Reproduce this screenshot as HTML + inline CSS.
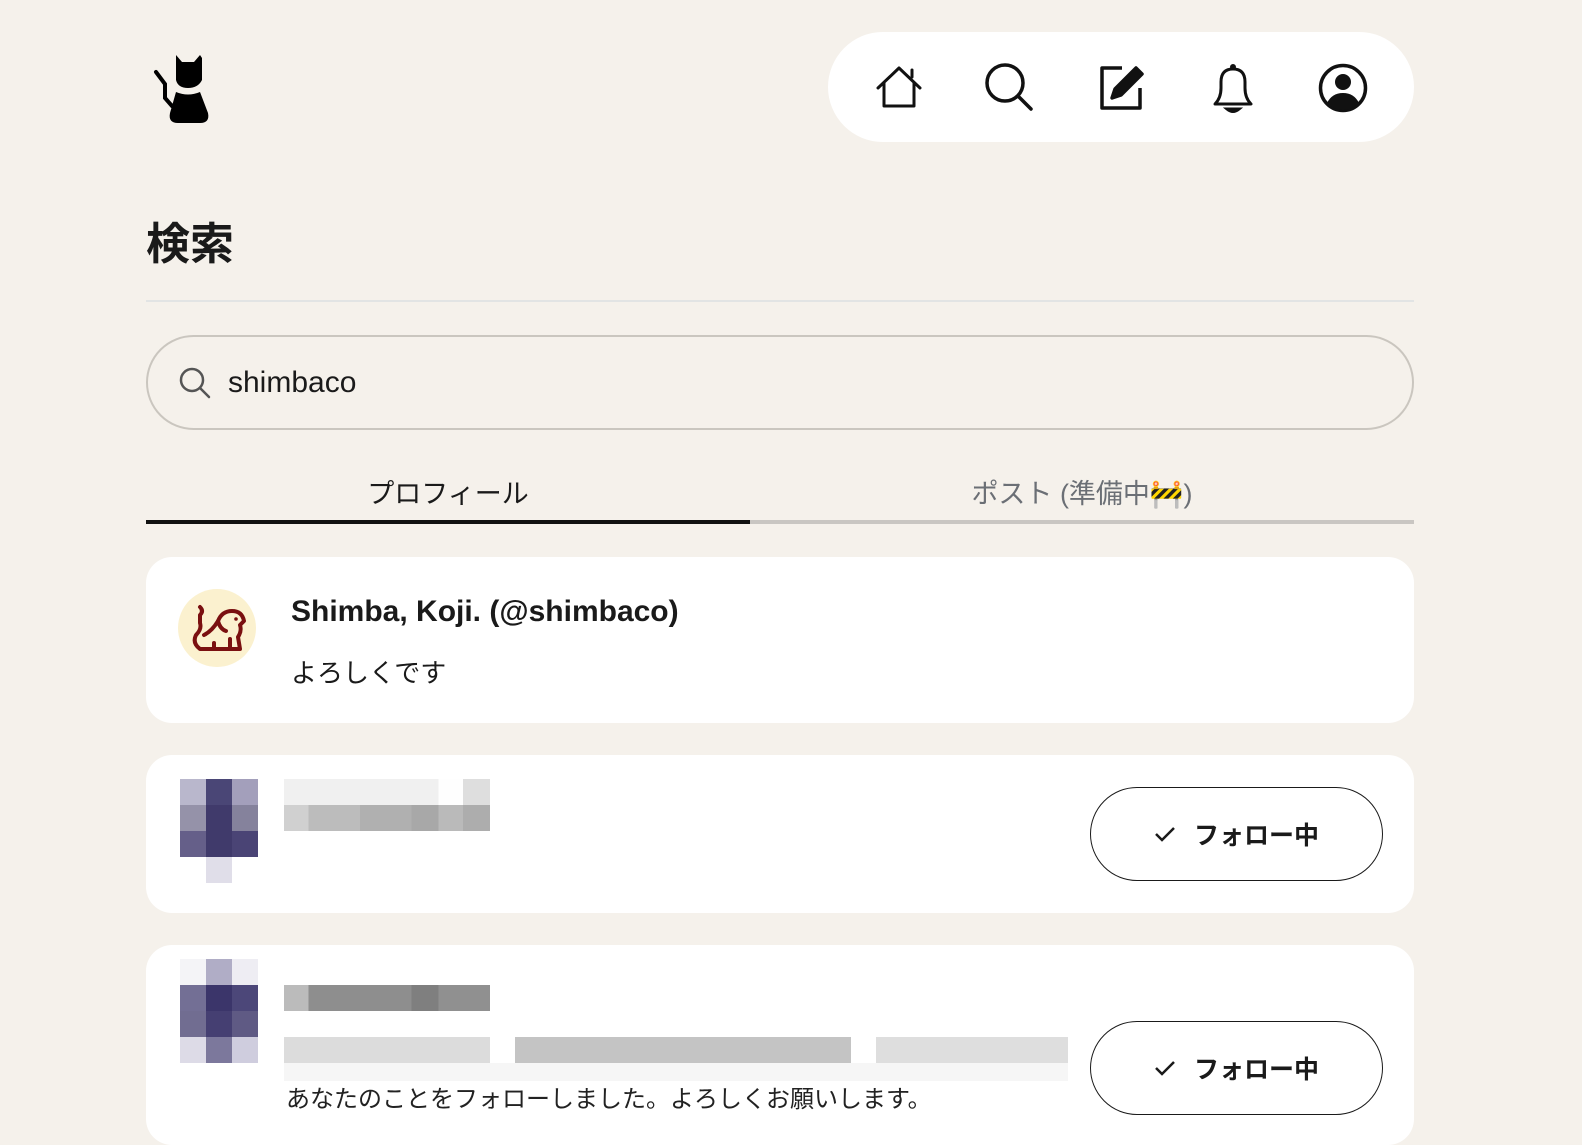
<!DOCTYPE html>
<html><head><meta charset="utf-8"><style>
*{box-sizing:border-box;margin:0;padding:0}
body{width:1582px;height:1098px;overflow:hidden;background:#f5f1eb;font-family:"Liberation Sans","Noto Sans CJK JP",sans-serif;color:#1a1a1a;position:relative}
.abs{position:absolute}
.nav{left:828px;top:32px;width:586px;height:110px;background:#fff;border-radius:55px}
.card{left:146px;width:1268px;background:#fff;border-radius:26px}
.blk{position:absolute;height:26px}
.btn{position:absolute;left:944px;width:293px;height:94px;border:1.5px solid #1a1a1a;border-radius:47px;font-weight:bold;font-size:25px;display:flex;align-items:center;justify-content:center;gap:18px}
</style></head><body>
<svg class="abs" style="left:152px;top:50px" width="62" height="76" viewBox="0 0 62 76">
<path d="M4 22 L13 34 L13 48 L20 56" stroke="#000" stroke-width="4" fill="none" stroke-linecap="round"/>
<path d="M24 5 L30 12 L42 12 L48 5 L50 8 L50 30 Q46 38 36 38 Q26 38 24 30 Z" fill="#000"/>
<path d="M24 42 Q36 47 48 42 L56 63 Q58 73 48 73 L26 73 Q16 73 18 63 Z" fill="#000"/>
</svg>
<div class="abs nav"></div>
<svg class="abs" style="left:876px;top:64px" width="48" height="48" viewBox="0 0 48 48" fill="none" stroke="#111" stroke-width="3" stroke-linejoin="round" stroke-linecap="round"><path d="M2 24 L23 4 L44 24"/><path d="M8 19 L8 42 L38 42 L38 19"/><path d="M36 6 L36 13"/></svg>
<svg class="abs" style="left:984px;top:62px" width="52" height="52" viewBox="0 0 52 52" fill="none" stroke="#111" stroke-width="3.5" stroke-linecap="round"><circle cx="21" cy="21" r="18"/><path d="M34 34 L47 47"/></svg>
<svg class="abs" style="left:1098px;top:62px" width="50" height="50" viewBox="0 0 50 50" fill="none" stroke="#111" stroke-width="3.5" stroke-linejoin="round"><path d="M24 6 L4 6 L4 46 L42 46 L42 26"/><path d="M14 36 L17 27 L38 6 L44 12 L23 33 Z" fill="#111"/></svg>
<svg class="abs" style="left:1210px;top:62px" width="46" height="52" viewBox="0 0 46 52" fill="none" stroke="#111" stroke-width="3"><path d="M5 42 Q11 36 11 26 L11 20 Q11 7 23 7 Q35 7 35 20 L35 26 Q35 36 41 42 Z" stroke-linejoin="round"/><path d="M17 47 Q23 52 29 47 Z" fill="#111"/><circle cx="23" cy="5" r="1.5" fill="#111"/></svg>
<svg class="abs" style="left:1318px;top:63px" width="50" height="50" viewBox="0 0 50 50"><circle cx="25" cy="25" r="22.5" fill="none" stroke="#111" stroke-width="3.5"/><circle cx="25" cy="19" r="8" fill="#111"/><path d="M9 40 Q14 30 25 30 Q36 30 41 40 Q34 47 25 47 Q16 47 9 40Z" fill="#111"/></svg>
<div class="abs" style="left:146px;top:208px;font-size:44px;font-weight:bold">検索</div>
<div class="abs" style="left:146px;top:300px;width:1268px;height:2px;background:#e2e4e4"></div>
<div class="abs" style="left:146px;top:335px;width:1268px;height:95px;border:2px solid #cac6bf;border-radius:48px"></div>
<svg class="abs" style="left:178px;top:366px" width="34" height="34" viewBox="0 0 34 34" fill="none" stroke="#555" stroke-width="2.5" stroke-linecap="round"><circle cx="14" cy="14" r="11"/><path d="M22 22 L31 31"/></svg>
<div class="abs" style="left:228px;top:366px;font-size:30px">shimbaco</div>
<div class="abs" style="left:146px;top:472px;width:604px;text-align:center;font-size:27px">プロフィール</div>
<div class="abs" style="left:750px;top:472px;width:664px;text-align:center;font-size:27px;color:#6b6f75">ポスト (準備中🚧)</div>
<div class="abs" style="left:146px;top:520px;width:1268px;height:4px;background:#c9c6c2"></div>
<div class="abs" style="left:146px;top:520px;width:604px;height:4px;background:#111"></div>
<div class="abs card" style="top:557px;height:166px">
<svg style="position:absolute;left:32px;top:32px" width="78" height="78" viewBox="0 0 78 78"><circle cx="39" cy="39" r="39" fill="#fbf1cf"/><path d="M22 18 Q26 22 22 26 L22 34 Q24 40 18 46 Q14 54 22 60 L62 60 L60 48 Q64 42 62 36 L66 32 Q64 22 54 22 Q44 22 40 32 Q34 42 26 46 M40 32 Q42 40 48 42 M36 60 L36 54 M52 60 L52 50" fill="none" stroke="#7a1010" stroke-width="4" stroke-linejoin="round" stroke-linecap="round"/><circle cx="58" cy="30" r="1.8" fill="#7a1010"/></svg>
<div style="position:absolute;left:145px;top:38px;font-size:30px;font-weight:bold">Shimba, Koji. (@shimbaco)</div>
<div style="position:absolute;left:145px;top:96px;font-size:26px">よろしくです</div>
</div>
<div class="abs card" style="top:755px;height:158px">
<div class="blk" style="left:34px;top:24px;width:26px;background:#b9b7cc"></div>
<div class="blk" style="left:60px;top:24px;width:26px;background:#4a4676"></div>
<div class="blk" style="left:86px;top:24px;width:26px;background:#a39fbb"></div>
<div class="blk" style="left:34px;top:50px;width:26px;background:#9592a9"></div>
<div class="blk" style="left:60px;top:50px;width:26px;background:#403a6b"></div>
<div class="blk" style="left:86px;top:50px;width:26px;background:#85829c"></div>
<div class="blk" style="left:34px;top:76px;width:26px;background:#655f89"></div>
<div class="blk" style="left:60px;top:76px;width:26px;background:#403a6b"></div>
<div class="blk" style="left:86px;top:76px;width:26px;background:#4a4475"></div>
<div class="blk" style="left:60px;top:102px;width:26px;background:#e0dee9"></div>
<div class="blk" style="left:138px;top:24px;width:206px;background:linear-gradient(90deg,#f0f0f0 0 75%,#fefefe 75% 87%,#dedede 87%)"></div>
<div class="blk" style="left:138px;top:50px;width:206px;background:linear-gradient(90deg,#d0d0d0 0 12%,#bcbcbc 12% 37%,#b0b0b0 37% 62%,#a8a8a8 62% 75%,#bababa 75% 87%,#adadad 87%)"></div>
<div class="btn" style="top:32px"><svg width="22" height="18" viewBox="0 0 22 18"><path d="M2 9 L8 15 L20 3" fill="none" stroke="#1a1a1a" stroke-width="2.5"/></svg>フォロー中</div>
</div>
<div class="abs card" style="top:945px;height:200px">
<div class="blk" style="left:34px;top:14px;width:26px;background:#f4f4f7"></div>
<div class="blk" style="left:60px;top:14px;width:26px;background:#b0adc6"></div>
<div class="blk" style="left:86px;top:14px;width:26px;background:#eeedf3"></div>
<div class="blk" style="left:34px;top:40px;width:26px;background:#736f95"></div>
<div class="blk" style="left:60px;top:40px;width:26px;background:#3b356a"></div>
<div class="blk" style="left:86px;top:40px;width:26px;background:#4c4779"></div>
<div class="blk" style="left:34px;top:66px;width:26px;background:#716d91"></div>
<div class="blk" style="left:60px;top:66px;width:26px;background:#453f72"></div>
<div class="blk" style="left:86px;top:66px;width:26px;background:#5f5a84"></div>
<div class="blk" style="left:34px;top:92px;width:26px;background:#dddbe7"></div>
<div class="blk" style="left:60px;top:92px;width:26px;background:#7c789c"></div>
<div class="blk" style="left:86px;top:92px;width:26px;background:#cfcdde"></div>
<div class="blk" style="left:138px;top:40px;width:206px;background:linear-gradient(90deg,#bbb 0 12%,#8e8e8e 12% 62%,#7f7f7f 62% 75%,#909090 75%)"></div>
<div class="blk" style="left:138px;top:92px;width:206px;background:#dcdcdc"></div>
<div class="blk" style="left:369px;top:92px;width:336px;background:#c4c4c4"></div>
<div class="blk" style="left:730px;top:92px;width:192px;background:#dedede"></div>
<div class="blk" style="left:138px;top:118px;width:784px;height:18px;background:#f6f6f6"></div>
<div style="position:absolute;left:140px;top:134px;font-size:24px;color:#222;white-space:nowrap">あなたのことをフォローしました。よろしくお願いします。</div>
<div class="btn" style="top:76px"><svg width="22" height="18" viewBox="0 0 22 18"><path d="M2 9 L8 15 L20 3" fill="none" stroke="#1a1a1a" stroke-width="2.5"/></svg>フォロー中</div>
</div>
</body></html>
